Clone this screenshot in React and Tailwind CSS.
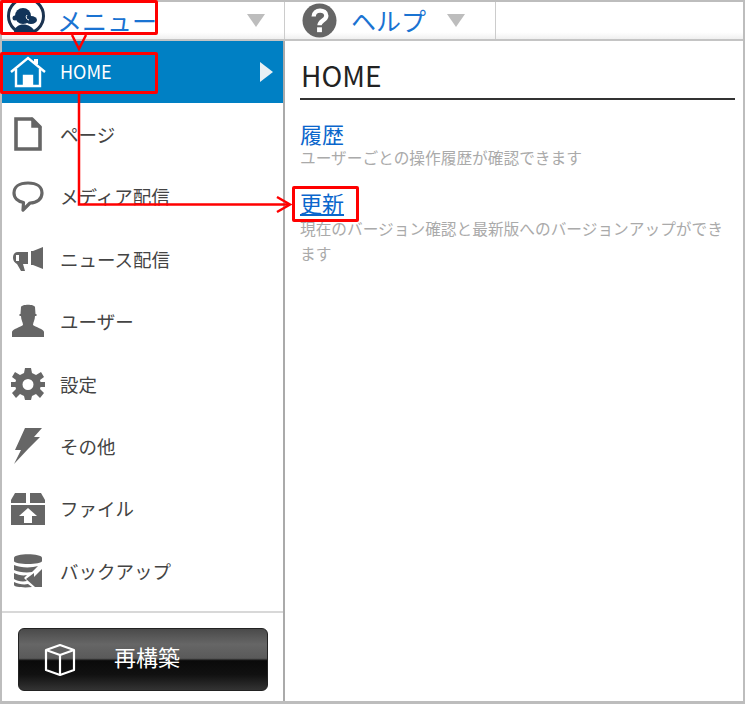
import React from "react";

const font = "font-['Noto_Sans_CJK_JP','Liberation_Sans',sans-serif]";

// sidebar icons
const HomeIcon = () => (
  <svg width="36" height="32" viewBox="0 0 36 32" fill="none" stroke="#fff" strokeWidth="2.4">
    <path d="M1 16 L18 2 L35 16" />
    <path d="M6 13 V30 H30 V13" />
    <path d="M14 30 V20 H22 V30" fill="#fff" />
    <path d="M26 3 V8" strokeWidth="4" />
  </svg>
);

const PageIcon = () => (
  <svg width="28" height="34" viewBox="0 0 28 34" fill="none" stroke="#666" strokeWidth="3.6">
    <path d="M2 2 H18 L26 10 V32 H2 Z" />
    <path d="M18 2 V10 H26 Z" fill="#666" strokeWidth="1.5" />
  </svg>
);

const BubbleIcon = () => (
  <svg width="32" height="32" viewBox="0 0 32 32" fill="none" stroke="#666" strokeWidth="3.2">
    <path d="M16 2 C25 2 30 6 30 12 C30 18 25 22 18 22 L11 29 L11.500 21.500 C6 20.500 2 17 2 12 C2 6 7 2 16 2 Z" strokeLinejoin="round" />
  </svg>
);

const MegaphoneIcon = () => (
  <svg width="32" height="26" viewBox="0 0 32 26" fill="#666">
    <path d="M31 1 L21 5 H19 V19 H21 L31 23 Z" />
    <path d="M16 6 H6 C2 6 1 9 1 12 C1 15 3 17 5 18 L9 25 L13 25 L11 18 H16 Z" />
    <path d="M4 9 H7 V15 H4 Z" fill="#fff" />
  </svg>
);

const UserIcon = () => (
  <svg width="34" height="34" viewBox="0 0 34 34" fill="#666">
    <path d="M10 3 C11 0 23 0 24 3 L24.500 10 H25.500 V12 H24 C24 16 22 18 22 21 C24 23 33 25 33 28 V33 H1 V28 C1 25 10 23 12 21 C12 18 10 16 10 12 H8.500 V10 H9.500 Z" />
  </svg>
);

const GearIcon = () => (
  <svg width="36" height="34" viewBox="0 0 36 34" fill="#666">
    <path
      fillRule="evenodd"
      d="M15 1 H21 L22 6 L26 8 L31 5 L34 10 L30 13 L30.500 15 H35 V20 H30.500 L30 22 L34 26 L30 31 L26 27 L22 29 L21 33 H15 L14 29 L10 27 L6 31 L2 26 L6 22 L5.500 20 H1 V15 H5.500 L6 13 L2 10 L5 5 L10 8 L14 6 Z M18 12 A5.500 5.500 0 1 0 18 23 A5.500 5.500 0 1 0 18 12 Z"
    />
  </svg>
);

const BoltIcon = () => (
  <svg width="30" height="38" viewBox="0 0 30 38" fill="#666">
    <path d="M12 1 H29 L21 10 H27 L16 21 L1 37 L8 23 H2 Z" />
  </svg>
);

const BoxIcon = () => (
  <svg width="36" height="34" viewBox="0 0 36 34" fill="#666">
    <path d="M5 1 H16 V11 H1 V8 Z" />
    <path d="M20 1 H31 L35 8 V11 H20 Z" />
    <path fillRule="evenodd" d="M1 13 H35 V33 H1 Z M18 16 L9 24 H14 V31 H22 V24 H27 Z" />
  </svg>
);

const BackupIcon = () => (
  <svg width="32" height="34" viewBox="0 0 32 34" fill="#666">
    <path d="M2 4 C2 -1 30 -1 30 4 V7 C30 11 2 11 2 7 Z" />
    <path d="M2 11 C8 14 20 14 26 12 L20 18 C14 19 6 18 2 16 Z" />
    <path d="M2 19 C6 21 11 22 15 21 L12 24 L15 27 C10 28 5 27 2 25 Z" />
    <path d="M2 28 C6 30 12 31 16 30 L20 33 C12 34 2 33 2 31 Z" />
    <path d="M30 15 V33 H23 L14 25 L22 19 V23 Z" />
  </svg>
);

const CubeIcon = () => (
  <svg width="34" height="34" viewBox="0 0 34 34" fill="none" stroke="#fff" strokeWidth="2.2" strokeLinejoin="round">
    <path d="M17 2 L31 7 V27 L17 32 L3 27 V7 Z" />
    <path d="M3 7 L17 12 L31 7 M17 12 V32" />
  </svg>
);

// monkey in a ring, cut off by the bar
const LogoIcon = () => (
  <svg width="38" height="30" viewBox="0 0 38 30">
    <circle cx="19" cy="14" r="17.500" fill="none" stroke="#1b3350" strokeWidth="3" />
    <circle cx="16" cy="14" r="8" fill="#123459" />
    <ellipse cx="24" cy="18" rx="6" ry="4" fill="#123459" />
    <circle cx="8" cy="16" r="2.500" fill="#123459" />
    <path d="M7 30 C8 20 24 20 28 30 Z" fill="#123459" />
    <path d="M20 13 A3 3 0 0 0 22 18" fill="none" stroke="#fff" strokeWidth="1" />
  </svg>
);

const HelpIcon = () => (
  <svg width="35" height="35" viewBox="0 0 36 36">
    <circle cx="18" cy="18" r="17.500" fill="#666" />
    <path d="M12 14 C12 6 25 6 25 13 C25 18 18 18 18 23" fill="none" stroke="#fff" strokeWidth="4.500" />
    <rect x="15.500" y="25" width="5" height="5" fill="#fff" />
  </svg>
);

const menuItems = [
  { label: "ページ", icon: <PageIcon /> },
  { label: "メディア配信", icon: <BubbleIcon /> },
  { label: "ニュース配信", icon: <MegaphoneIcon /> },
  { label: "ユーザー", icon: <UserIcon /> },
  { label: "設定", icon: <GearIcon /> },
  { label: "その他", icon: <BoltIcon /> },
  { label: "ファイル", icon: <BoxIcon /> },
  { label: "バックアップ", icon: <BackupIcon /> },
];

const Arrow = () => (
  <div className="w-0 h-0 border-x-[9px] border-x-transparent border-t-[13px] border-t-[#bdbdbd]" />
);

// red call-outs drawn over the page
const Annotations = () => (
  <>
    <div className="absolute left-0 top-0 w-[158px] h-[35px] border-[3px] border-[#f00] rounded-[2px]" />
    <div className="absolute left-0 top-[52px] w-[158px] h-[42px] border-[3px] border-[#f00] rounded-[2px]" />
    <div className="absolute left-[292px] top-[186px] w-[67px] h-[36px] border-[3px] border-[#f00] rounded-[2px]" />
    <svg className="absolute left-0 top-0" width="300" height="215" fill="none" stroke="#f00" strokeWidth="2.5">
      <path d="M79 94 V204.500 H290" />
      <path d="M277 197 L290 204.500 L277 212" />
      <path d="M72 35 L79 49 L86 35" />
    </svg>
  </>
);

export default function App() {
  return (
    <div className={`relative w-[745px] h-[704px] bg-white border-t-2 border-l-2 border-r-2 border-b-[3px] border-[#bdbdbd] ${font}`}>
      {/* top bar */}
      <div className="flex h-[39px] border-b-2 border-[#c4c4c4] bg-[linear-gradient(#fff_82%,#f0f0f0_100%)]">
        <div className="flex items-center w-[283px] pl-[5px] pr-[19px] border-r border-[#ccc]">
          <div className="mb-[7px]"><LogoIcon /></div>
          <span className="ml-[12px] text-[25px] leading-none text-[#1a73d2]">メニュー</span>
          <div className="ml-auto"><Arrow /></div>
        </div>
        <div className="flex items-center w-[211px] pl-[17px] border-r border-[#ccc]">
          <HelpIcon />
          <span className="ml-[14px] text-[25px] leading-none text-[#1a73d2]">ヘルプ</span>
          <div className="ml-[21px]"><Arrow /></div>
        </div>
      </div>

      <div className="flex h-[660px]">
        {/* sidebar */}
        <div className="flex flex-col w-[283px] shrink-0 border-r-2 border-[#aaa]">
          <div className="flex items-center h-[62px] bg-[#0080c4] pl-[8px] pr-[10px] shrink-0">
            <div className="w-[36px] flex justify-center"><HomeIcon /></div>
            <span className="ml-[14px] mb-[2px] text-[18px] leading-none text-white">HOME</span>
            <div className="ml-auto w-0 h-0 border-y-[10px] border-y-transparent border-l-[13px] border-l-[#e8f0f5]" />
          </div>
          {menuItems.map((item) => (
            <div key={item.label} className="flex items-center h-[62.4px] shrink-0 pl-[8px]">
              <div className="w-[36px] flex justify-center">{item.icon}</div>
              <span className="ml-[14px] text-[18.500px] leading-none text-[#444]">{item.label}</span>
            </div>
          ))}
          <div className="mt-auto h-[90px] border-t-2 border-[#d8d8d8] pt-[15px] pl-[16px]">
            <div className="flex items-center w-[250px] h-[63px] rounded-md border border-[#222] bg-[linear-gradient(#4a4a4a_0%,#666_25%,#5a5a5a_48%,#0a0a0a_52%,#111_75%,#333_100%)] pl-[24px]">
              <CubeIcon />
              <span className="ml-[37px] mb-[8px] text-[22px] leading-none text-white">再構築</span>
            </div>
          </div>
        </div>

        {/* content */}
        <div className="flex-1 pl-[15px] pr-[8px] pt-[17px]">
          <h1 className="h-[42px] border-b-2 border-[#333] text-[28px] leading-[34px] pl-[1px] text-[#222]">HOME</h1>
          <a className="block mt-[20px] text-[22px] leading-[27px] text-[#0a66cc]">履歴</a>
          <p className="text-[15.700px] leading-[22px] text-[#aaa]">ユーザーごとの操作履歴が確認できます</p>
          <a className="block mt-[20px] text-[22px] leading-[27px] text-[#0a66cc] underline">更新</a>
          <p className="text-[15.700px] leading-[25px] text-[#aaa]">現在のバージョン確認と最新版へのバージョンアップができます</p>
        </div>
      </div>

      <div className="absolute -left-[2px] -top-[2px] w-[745px] h-[704px] pointer-events-none">
        <Annotations />
      </div>
    </div>
  );
}
